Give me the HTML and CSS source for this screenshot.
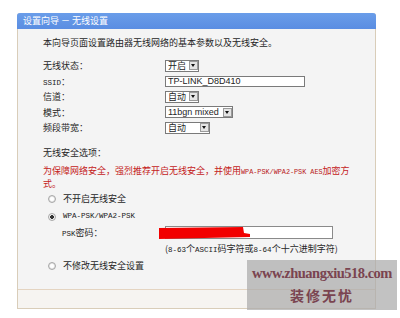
FILE: index.html
```html
<!DOCTYPE html>
<html lang="zh-CN">
<head>
    <meta charset="UTF-8">
    <title>设置向导 － 无线设置</title>
    <link rel="stylesheet" href="styles.css">
</head>
<body>
    <div class="panel">
        <div class="panel-title">设置向导 － 无线设置</div>
        <div class="panel-body">
            <p class="intro">本向导页面设置路由器无线网络的基本参数以及无线安全。</p>

            <div class="fields">
                <div class="field">
                    <span class="label">无线状态：</span>
                    <span class="select w-on"><span class="val">开启</span><span class="arrow"></span></span>
                </div>
                <div class="field">
                    <span class="label"><span class="en">SSID</span>：</span>
                    <input class="text-input" type="text" value="TP-LINK_D8D410">
                </div>
                <div class="field">
                    <span class="label">信道：</span>
                    <span class="select w-on"><span class="val">自动</span><span class="arrow"></span></span>
                </div>
                <div class="field">
                    <span class="label">模式：</span>
                    <span class="select w-mode"><span class="val latin">11bgn mixed</span><span class="arrow"></span></span>
                </div>
                <div class="field">
                    <span class="label">频段带宽：</span>
                    <span class="select w-band"><span class="val">自动</span><span class="arrow"></span></span>
                </div>
            </div>

            <p class="section">无线安全选项：</p>
            <p class="warn">为保障网络安全，强烈推荐开启无线安全，并使用<span class="en">WPA-PSK/WPA2-PSK AES</span>加密方式。</p>

            <label class="radio"><input type="radio" name="sec">不开启无线安全</label>
            <label class="radio"><input type="radio" name="sec" checked><span class="en">WPA-PSK/WPA2-PSK</span></label>
            <div class="psk">
                <span class="psk-label"><span class="en">PSK</span>密码：</span>
                <span class="psk-input">
                    <svg class="redact" width="92" height="12" viewBox="0 0 92 12"><polygon points="0,1 84,0 85,6 91,7 91,10 0,12" fill="#f20000"/></svg>
                </span>
            </div>
            <p class="hint">(<span class="en">8-63</span>个<span class="en">ASCII</span>码字符或<span class="en">8-64</span>个十六进制字符)</p>
            <label class="radio last"><input type="radio" name="sec">不修改无线安全设置</label>
        </div>
        <div class="panel-foot"></div>
    </div>

    <div class="watermark">
        <div class="wm-url">www.zhuangxiu518.com</div>
        <div class="wm-name">装修无忧</div>
    </div>
</body>
</html>
```

FILE: styles.css
```css
body {
    margin: 0;
    padding: 13px 0 0 17px;
    background: #ffffff;
    font-family: "Noto Sans CJK SC", sans-serif;
    font-size: 9px;
    color: #262626;
}
p {
    margin: 0;
}
.en {
    font-family: "Liberation Mono", monospace;
    font-size: 7.5px;
    line-height: 1;
    color: #1a1a1a;
}
.panel {
    width: 357px;
    border: 1px solid #d9cdb9;
    border-top: none;
    border-radius: 3px 3px 0 0;
    background: #f4f4f4;
}
.panel-title {
    height: 16px;
    line-height: 16px;
    margin: 0 -1px;
    padding-left: 6px;
    border-radius: 3px 3px 0 0;
    background: linear-gradient(#6a9de9, #5a8de2);
    color: #ffffff;
}
.panel-body {
    padding: 7px 16px 14px 25px;
}
.intro {
    line-height: 13px;
}
.fields {
    margin-top: 9px;
}
.field {
    display: flex;
    align-items: center;
    height: 15.5px;
}
.label {
    width: 122px;
}

/* 下拉框 */
.select {
    display: inline-flex;
    align-items: center;
    justify-content: space-between;
    box-sizing: border-box;
    height: 12px;
    padding-left: 2px;
    border: 1px solid #7a7a7a;
    background: #ffffff;
}
.select .val {
    line-height: 10px;
}
.select .latin {
    font-family: "Liberation Sans", sans-serif;
}
.w-on { width: 34px; }
.w-mode { width: 68px; }
.w-band { width: 45px; }
.arrow {
    display: flex;
    align-items: center;
    justify-content: center;
    box-sizing: border-box;
    width: 9px;
    height: 9px;
    margin-right: 0.5px;
    border: 1px solid #9a9a9a;
    background: #e4e4e4;
}
.arrow::before {
    content: "";
    border-left: 2.5px solid transparent;
    border-right: 2.5px solid transparent;
    border-top: 3px solid #111;
}
.text-input {
    box-sizing: border-box;
    width: 140px;
    height: 11px;
    margin: 0;
    padding: 0 2px;
    border: 1px solid #7a7a7a;
    background: #ffffff;
    font-family: "Liberation Sans", sans-serif;
    font-size: 9px;
    line-height: 9px;
    color: #222;
}

.section {
    margin-top: 10px;
    line-height: 13px;
}
.warn {
    width: 316px;
    margin-top: 5px;
    line-height: 13px;
    color: #c42222;
}
.warn .en {
    font-size: 6.8px;
    color: #b82020;
}

/* 单选 */
.radio {
    display: flex;
    align-items: center;
    height: 18px;
    padding-left: 5px;
}
.radio.last {
    margin-top: 2px;
}
.radio input {
    appearance: none;
    width: 8px;
    height: 8px;
    margin: 0 7px 0 0;
    border: 1px solid #a8a8a8;
    border-radius: 50%;
    background: radial-gradient(circle, #ffffff 0 1.5px, #dedede 3px);
}
.radio input:checked {
    background: radial-gradient(circle, #333 0 1.6px, #ffffff 2.2px, #dddddd 3.5px);
}
.psk {
    display: flex;
    align-items: center;
    height: 14px;
    padding-left: 19px;
}
.psk-label {
    width: 103px;
}
.psk-input {
    position: relative;
    box-sizing: border-box;
    width: 168px;
    height: 13px;
    border: 1px solid #8a8a8a;
    background: #ffffff;
}
.redact {
    position: absolute;
    left: -7px;
    top: 0;
}
.hint {
    margin: 2px 0 0 122px;
    line-height: 13px;
}
.panel-foot {
    height: 18px;
    border-top: 1px solid #e4d4c1;
    background: #f6f4f1;
}

/* 水印 */
.watermark {
    position: absolute;
    left: 247px;
    top: 260px;
    width: 150px;
    height: 50px;
    background: rgba(170, 170, 170, 0.72);
    color: #7a4450;
    text-align: center;
}
.wm-url {
    margin-top: 6px;
    font-family: "Liberation Serif", serif;
    font-weight: bold;
    font-size: 14.5px;
    line-height: 1;
    letter-spacing: -0.5px;
}
.wm-name {
    margin-top: 7px;
    font-family: "Noto Sans CJK SC", sans-serif;
    font-weight: bold;
    font-size: 14px;
    line-height: 1;
    letter-spacing: 2px;
}
```
